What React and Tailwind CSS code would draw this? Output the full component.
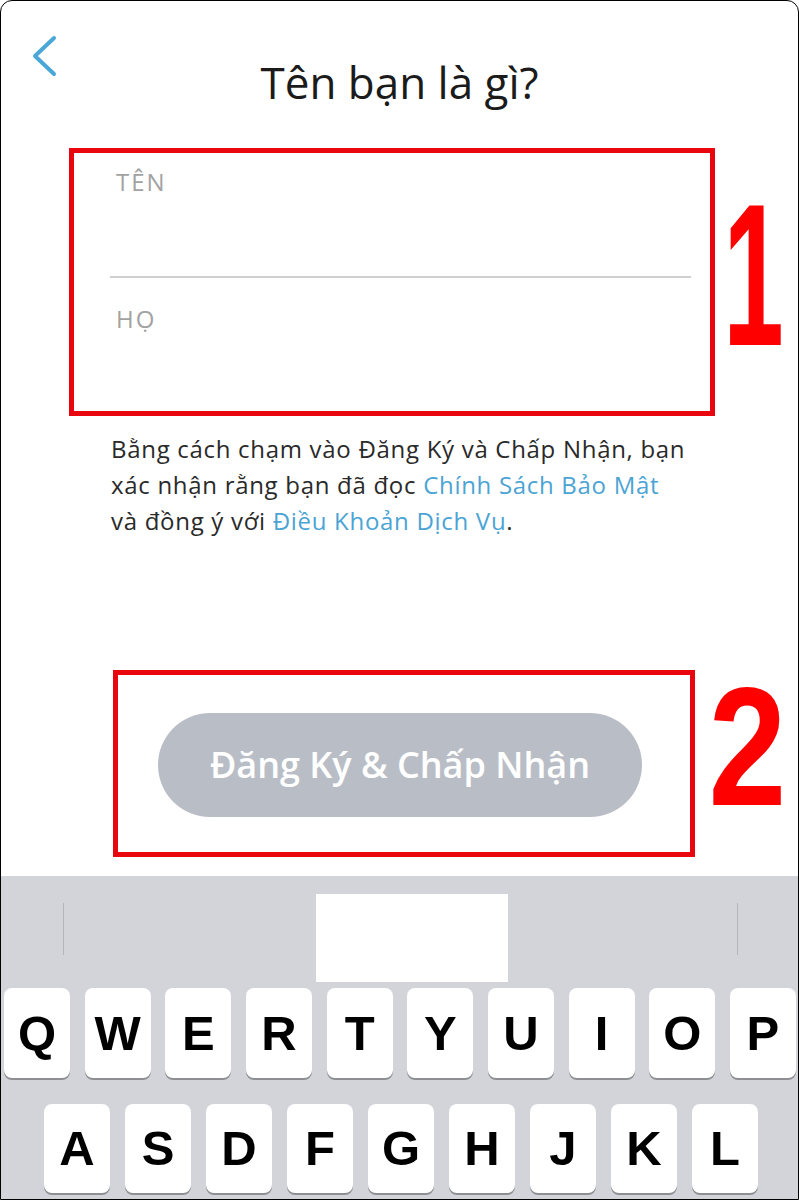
import React from 'react';

const row1 = ['Q', 'W', 'E', 'R', 'T', 'Y', 'U', 'I', 'O', 'P'];
const row2 = ['A', 'S', 'D', 'F', 'G', 'H', 'J', 'K', 'L'];

const Key = ({ label }) => (
  <div className="w-[66px] h-full bg-white rounded-[8px] shadow-[0_2px_0_#8d8f93] flex items-center justify-center">
    <span className="font-['Liberation_Sans',Arial,sans-serif] font-bold text-[49px] leading-none text-black">{label}</span>
  </div>
);

const App = () => {
  return (
    <div className="w-[799px] h-[1200px] border border-black rounded-t-[12px] overflow-hidden flex flex-col bg-white font-['Open_Sans',sans-serif]">
      {/* form area */}
      <div className="h-[875px] shrink-0">
        {/* header */}
        <div className="flex items-start pt-[33px]">
          <svg className="ml-[30px] mt-[1px]" width="26" height="42" viewBox="0 0 26 42" fill="none">
            <path d="M23 3 L4 21 L23 39" stroke="#4aa7d7" strokeWidth="4" strokeLinecap="round" strokeLinejoin="round" />
          </svg>
          <h1 className="flex-1 text-center mt-[20px] text-[44px] leading-[56px] text-[#1b1b1b]">Tên bạn là gì?</h1>
          <div className="w-[56px]" />
        </div>

        {/* name fields */}
        <div className="flex items-center mt-[38px] ml-[68px]">
          <div className="shrink-0 w-[646px] h-[268px] border-[5px] border-[#e8070f] pt-[13px]">
            <div className="pl-[42px] text-[24px] leading-[32px] tracking-[2px] text-[#a2a2a2]">TÊN</div>
            <div className="mt-[78px] ml-[36px] mr-[19px] h-[2px] bg-[#d0d0d0]" />
            <div className="pl-[42px] mt-[25px] text-[24px] leading-[32px] tracking-[2px] text-[#a2a2a2]">HỌ</div>
          </div>
          <div className="shrink-0 w-[51px] ml-[13px] -mt-[14px] flex justify-center">
            <span className="inline-block scale-x-[0.68] scale-y-[1.27] font-['Liberation_Sans',Arial,sans-serif] font-bold text-[160px] leading-none text-[#ff0000]">1</span>
          </div>
        </div>

        {/* terms */}
        <p className="mt-[15px] pl-[110px] text-[24px] leading-[36px] tracking-[0.7px] text-[#2a2a2a]">
          Bằng cách chạm vào Đăng Ký và Chấp Nhận, bạn
          <br />
          xác nhận rằng bạn đã đọc <span className="text-[#4ba4d4]">Chính Sách Bảo Mật</span>
          <br />
          và đồng ý với <span className="text-[#4ba4d4]">Điều Khoản Dịch Vụ</span>.
        </p>

        {/* submit */}
        <div className="flex items-center mt-[131px] ml-[112px]">
          <div className="shrink-0 w-[582px] h-[187px] border-[5px] border-[#e8070f] pl-[40px] pt-[38px]">
            <button className="w-[484px] h-[104px] rounded-full bg-[#b9bec6] text-white text-[36px] font-semibold">
              Đăng Ký &amp; Chấp Nhận
            </button>
          </div>
          <div className="shrink-0 w-[71px] ml-[17px] -mt-[34px] flex justify-center">
            <span className="inline-block scale-y-[1.2] font-['Liberation_Sans',Arial,sans-serif] font-bold text-[140px] leading-none text-[#ff0000]">2</span>
          </div>
        </div>
      </div>

      {/* keyboard */}
      <div className="flex-1 bg-[#d2d4da] flex flex-col">
        <div className="h-[112px] flex items-start pt-[18px]">
          <div className="ml-[62px] mt-[9px] w-px h-[52px] bg-[#b3b6bc]" />
          <div className="ml-[252px] w-[192px] h-[88px] bg-white" />
          <div className="ml-[229px] mt-[9px] w-px h-[52px] bg-[#b3b6bc]" />
        </div>
        <div className="h-[90px] flex justify-between pl-[3px] pr-[2px]">
          {row1.map((k) => (
            <Key key={k} label={k} />
          ))}
        </div>
        <div className="h-[89px] mt-[26px] flex justify-between pl-[43px] pr-[40px]">
          {row2.map((k) => (
            <Key key={k} label={k} />
          ))}
        </div>
      </div>
    </div>
  );
};

export default App;
